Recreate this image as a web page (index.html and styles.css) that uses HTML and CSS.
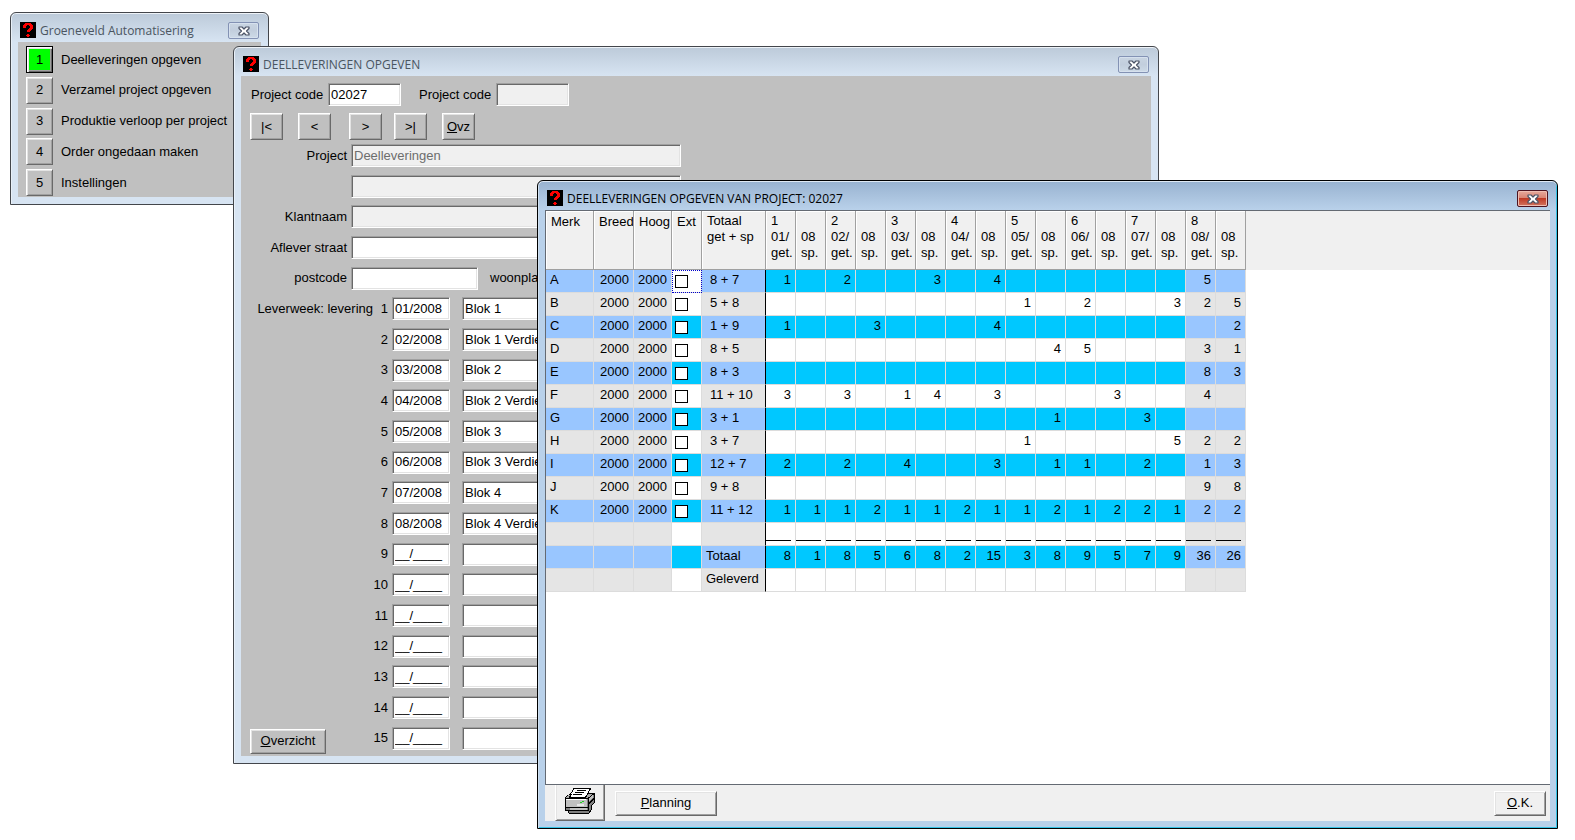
FILE: index.html
```
<!DOCTYPE html>
<html lang="nl">
<head>
<meta charset="utf-8">
<title>Deelleveringen opgeven</title>
<link rel="stylesheet" href="styles.css">
</head>
<body>
<svg class="defs" aria-hidden="true">
  <symbol id="app-icon" viewBox="0 0 16 16" shape-rendering="crispEdges">
    <path fill="#000" d="M0 0h16v16H0z"/>
    <path fill="#f00" d="M5 1h6v1h1v1h1v4h-1v1h-1v1h-1v1H7V8h1V7h1V6h1V4H9V3H7v1H6v2H3V3h1V2h1zM7 12h2v1h1v1H9v1H7v-1H6v-1h1z"/>
  </symbol>
  <symbol id="close-icon" viewBox="0 0 12 10">
    <path fill="#fff" stroke="#4b5366" stroke-width="1.200" stroke-linejoin="round" d="M1 1h3l2 2 2-2h3v1.500L8.500 5 11 7.500V9H8L6 7 4 9H1V7.500L3.500 5 1 2.500z"/>
  </symbol>
</svg>
<main class="desktop">
  <section class="window menu-window">
    <header class="titlebar">
      <svg class="app-icon" aria-hidden="true"><use href="#app-icon"/></svg>
      <h1 class="title">Groeneveld Automatisering</h1>
      <button class="close" aria-label="Sluiten"><svg class="close-icon"><use href="#close-icon"/></svg></button>
    </header>
    <div class="client menu">
      <div class="menu-row"><button class="btn menu-btn current" id="m1">1</button><label for="m1">Deelleveringen opgeven</label></div>
      <div class="menu-row"><button class="btn menu-btn" id="m2">2</button><label for="m2">Verzamel project opgeven</label></div>
      <div class="menu-row"><button class="btn menu-btn" id="m3">3</button><label for="m3">Produktie verloop per project</label></div>
      <div class="menu-row"><button class="btn menu-btn" id="m4">4</button><label for="m4">Order ongedaan maken</label></div>
      <div class="menu-row"><button class="btn menu-btn" id="m5">5</button><label for="m5">Instellingen</label></div>
    </div>
  </section>

  <section class="window form-window">
    <header class="titlebar">
      <svg class="app-icon" aria-hidden="true"><use href="#app-icon"/></svg>
      <h1 class="title">DEELLEVERINGEN OPGEVEN</h1>
      <button class="close" aria-label="Sluiten"><svg class="close-icon"><use href="#close-icon"/></svg></button>
    </header>
    <form class="client form">
      <div class="code-row">
        <label for="code1">Project code</label><input class="field code" id="code1" value="02027">
        <label class="second" for="code2">Project code</label><input class="field code" id="code2" disabled>
      </div>
      <div class="nav-row">
        <button type="button" class="btn nav-btn">|&lt;</button>
        <button type="button" class="btn nav-btn">&lt;</button>
        <button type="button" class="btn nav-btn">&gt;</button>
        <button type="button" class="btn nav-btn">&gt;|</button>
        <button type="button" class="btn nav-btn"><u>O</u>vz</button>
      </div>
      <div class="fields">
        <div class="row"><label class="name" for="project">Project</label><input class="field long" id="project" value="Deelleveringen" disabled></div>
        <div class="row"><span class="name"></span><input class="field long" aria-label="Project vervolg" disabled></div>
        <div class="row"><label class="name" for="klant">Klantnaam</label><input class="field long" id="klant" disabled></div>
        <div class="row"><label class="name" for="straat">Aflever straat</label><input class="field long" id="straat"></div>
        <div class="row"><label class="name" for="postcode">postcode</label><input class="field zip" id="postcode"><label class="city" for="plaats">woonplaats</label><input class="field" id="plaats"></div>
        <div class="row"><span class="week">Leverweek: levering</span><label class="num" for="w1">1</label><input class="field date" id="w1" value="01/2008"><input class="field long" aria-label="Omschrijving 1" value="Blok 1"></div>
        <div class="row"><span class="week"></span><label class="num" for="w2">2</label><input class="field date" id="w2" value="02/2008"><input class="field long" aria-label="Omschrijving 2" value="Blok 1 Verdieping"></div>
        <div class="row"><span class="week"></span><label class="num" for="w3">3</label><input class="field date" id="w3" value="03/2008"><input class="field long" aria-label="Omschrijving 3" value="Blok 2"></div>
        <div class="row"><span class="week"></span><label class="num" for="w4">4</label><input class="field date" id="w4" value="04/2008"><input class="field long" aria-label="Omschrijving 4" value="Blok 2 Verdieping"></div>
        <div class="row"><span class="week"></span><label class="num" for="w5">5</label><input class="field date" id="w5" value="05/2008"><input class="field long" aria-label="Omschrijving 5" value="Blok 3"></div>
        <div class="row"><span class="week"></span><label class="num" for="w6">6</label><input class="field date" id="w6" value="06/2008"><input class="field long" aria-label="Omschrijving 6" value="Blok 3 Verdieping"></div>
        <div class="row"><span class="week"></span><label class="num" for="w7">7</label><input class="field date" id="w7" value="07/2008"><input class="field long" aria-label="Omschrijving 7" value="Blok 4"></div>
        <div class="row"><span class="week"></span><label class="num" for="w8">8</label><input class="field date" id="w8" value="08/2008"><input class="field long" aria-label="Omschrijving 8" value="Blok 4 Verdieping"></div>
        <div class="row"><span class="week"></span><label class="num" for="w9">9</label><input class="field date" id="w9" value="__/____"><input class="field long" aria-label="Omschrijving 9"></div>
        <div class="row"><span class="week"></span><label class="num" for="w10">10</label><input class="field date" id="w10" value="__/____"><input class="field long" aria-label="Omschrijving 10"></div>
        <div class="row"><span class="week"></span><label class="num" for="w11">11</label><input class="field date" id="w11" value="__/____"><input class="field long" aria-label="Omschrijving 11"></div>
        <div class="row"><span class="week"></span><label class="num" for="w12">12</label><input class="field date" id="w12" value="__/____"><input class="field long" aria-label="Omschrijving 12"></div>
        <div class="row"><span class="week"></span><label class="num" for="w13">13</label><input class="field date" id="w13" value="__/____"><input class="field long" aria-label="Omschrijving 13"></div>
        <div class="row"><span class="week"></span><label class="num" for="w14">14</label><input class="field date" id="w14" value="__/____"><input class="field long" aria-label="Omschrijving 14"></div>
        <div class="row"><span class="week"><button type="button" class="btn overview"><u>O</u>verzicht</button></span><label class="num" for="w15">15</label><input class="field date" id="w15" value="__/____"><input class="field long" aria-label="Omschrijving 15"></div>
      </div>
    </form>
  </section>

  <section class="window active grid-window">
    <header class="titlebar">
      <svg class="app-icon" aria-hidden="true"><use href="#app-icon"/></svg>
      <h1 class="title">DEELLEVERINGEN OPGEVEN VAN PROJECT: 02027</h1>
      <button class="close" aria-label="Sluiten"><svg class="close-icon"><use href="#close-icon"/></svg></button>
    </header>
    <div class="client panel">
      <div class="pane">
        <table class="grid">
          <colgroup>
            <col class="c-merk"><col class="c-breed"><col class="c-hoog"><col class="c-ext"><col class="c-totaal">
            <col class="c-week" span="16"><col>
          </colgroup>
          <thead>
            <tr>
              <th>Merk</th><th>Breed</th><th>Hoog</th><th>Ext</th><th>Totaal<br>get + sp</th>
              <th>1<br>01/<br>get.</th><th><br>08<br>sp.</th><th>2<br>02/<br>get.</th><th><br>08<br>sp.</th>
              <th>3<br>03/<br>get.</th><th><br>08<br>sp.</th><th>4<br>04/<br>get.</th><th><br>08<br>sp.</th>
              <th>5<br>05/<br>get.</th><th><br>08<br>sp.</th><th>6<br>06/<br>get.</th><th><br>08<br>sp.</th>
              <th>7<br>07/<br>get.</th><th><br>08<br>sp.</th><th>8<br>08/<br>get.</th><th><br>08<br>sp.</th><th></th>
            </tr>
          </thead>
          <tbody>
            <tr><td>A</td><td>2000</td><td>2000</td><td class="focus"><input type="checkbox" aria-label="Ext A"></td><td>8 + 7</td><td>1</td><td></td><td>2</td><td></td><td></td><td>3</td><td></td><td>4</td><td></td><td></td><td></td><td></td><td></td><td></td><td>5</td><td></td><td></td></tr>
            <tr><td>B</td><td>2000</td><td>2000</td><td><input type="checkbox" aria-label="Ext B"></td><td>5 + 8</td><td></td><td></td><td></td><td></td><td></td><td></td><td></td><td></td><td>1</td><td></td><td>2</td><td></td><td></td><td>3</td><td>2</td><td>5</td><td></td></tr>
            <tr><td>C</td><td>2000</td><td>2000</td><td><input type="checkbox" aria-label="Ext C"></td><td>1 + 9</td><td>1</td><td></td><td></td><td>3</td><td></td><td></td><td></td><td>4</td><td></td><td></td><td></td><td></td><td></td><td></td><td></td><td>2</td><td></td></tr>
            <tr><td>D</td><td>2000</td><td>2000</td><td><input type="checkbox" aria-label="Ext D"></td><td>8 + 5</td><td></td><td></td><td></td><td></td><td></td><td></td><td></td><td></td><td></td><td>4</td><td>5</td><td></td><td></td><td></td><td>3</td><td>1</td><td></td></tr>
            <tr><td>E</td><td>2000</td><td>2000</td><td><input type="checkbox" aria-label="Ext E"></td><td>8 + 3</td><td></td><td></td><td></td><td></td><td></td><td></td><td></td><td></td><td></td><td></td><td></td><td></td><td></td><td></td><td>8</td><td>3</td><td></td></tr>
            <tr><td>F</td><td>2000</td><td>2000</td><td><input type="checkbox" aria-label="Ext F"></td><td>11 + 10</td><td>3</td><td></td><td>3</td><td></td><td>1</td><td>4</td><td></td><td>3</td><td></td><td></td><td></td><td>3</td><td></td><td></td><td>4</td><td></td><td></td></tr>
            <tr><td>G</td><td>2000</td><td>2000</td><td><input type="checkbox" aria-label="Ext G"></td><td>3 + 1</td><td></td><td></td><td></td><td></td><td></td><td></td><td></td><td></td><td></td><td>1</td><td></td><td></td><td>3</td><td></td><td></td><td></td><td></td></tr>
            <tr><td>H</td><td>2000</td><td>2000</td><td><input type="checkbox" aria-label="Ext H"></td><td>3 + 7</td><td></td><td></td><td></td><td></td><td></td><td></td><td></td><td></td><td>1</td><td></td><td></td><td></td><td></td><td>5</td><td>2</td><td>2</td><td></td></tr>
            <tr><td>I</td><td>2000</td><td>2000</td><td><input type="checkbox" aria-label="Ext I"></td><td>12 + 7</td><td>2</td><td></td><td>2</td><td></td><td>4</td><td></td><td></td><td>3</td><td></td><td>1</td><td>1</td><td></td><td>2</td><td></td><td>1</td><td>3</td><td></td></tr>
            <tr><td>J</td><td>2000</td><td>2000</td><td><input type="checkbox" aria-label="Ext J"></td><td>9 + 8</td><td></td><td></td><td></td><td></td><td></td><td></td><td></td><td></td><td></td><td></td><td></td><td></td><td></td><td></td><td>9</td><td>8</td><td></td></tr>
            <tr><td>K</td><td>2000</td><td>2000</td><td><input type="checkbox" aria-label="Ext K"></td><td>11 + 12</td><td>1</td><td>1</td><td>1</td><td>2</td><td>1</td><td>1</td><td>2</td><td>1</td><td>1</td><td>2</td><td>1</td><td>2</td><td>2</td><td>1</td><td>2</td><td>2</td><td></td></tr>
            <tr class="rule"><td></td><td></td><td></td><td></td><td></td><td></td><td></td><td></td><td></td><td></td><td></td><td></td><td></td><td></td><td></td><td></td><td></td><td></td><td></td><td></td><td></td><td></td></tr>
            <tr class="sum"><td></td><td></td><td></td><td></td><td>Totaal</td><td>8</td><td>1</td><td>8</td><td>5</td><td>6</td><td>8</td><td>2</td><td>15</td><td>3</td><td>8</td><td>9</td><td>5</td><td>7</td><td>9</td><td>36</td><td>26</td><td></td></tr>
            <tr class="sum"><td></td><td></td><td></td><td></td><td>Geleverd</td><td></td><td></td><td></td><td></td><td></td><td></td><td></td><td></td><td></td><td></td><td></td><td></td><td></td><td></td><td></td><td></td><td></td></tr>
          </tbody>
        </table>
      </div>
      <footer class="actions">
        <button class="btn print" aria-label="Afdrukken">
          <svg class="printer" viewBox="0 0 30 27" aria-hidden="true" shape-rendering="crispEdges">
            <path fill="#808080" stroke="#000" d="M.5 10.500 6 6.500H29.500V15.500L26.500 18.500V22.500L23.500 26.500H4.500L2.500 23.500H.5z"/>
            <path fill="#a8a8a8" d="M1 10 6 7h23l-6 4H1z"/>
            <path fill="#c0c0c0" d="M1 12h21v8H1z"/>
            <path fill="#fff" stroke="#000" d="M8.500 1.500H25.500L20.500 10.500H4.500L6.500 6.500z"/>
            <path fill="none" stroke="#000" d="M12 3.500h9M10 5.500h9M8 7.500h9M1 11.500h22v12M1 20.500h22M3 23.500h20M23 11.500l6-5M24 16.500l5-5"/>
            <path fill="#e8e8e8" d="M12 17h7v2h-7z"/>
            <path fill="none" stroke="#20d020" d="M15 15.500h2M17 14.500h2"/>
            <path fill="none" stroke="#fff" d="M1 12.500h20"/>
            <path fill="#c0c0c0" d="M5 21h17v2H5zM24 11l4-4v3l-4 4z"/>
          </svg>
        </button>
        <button class="btn planning"><u>P</u>lanning</button>
        <button class="btn ok"><u>O</u>.K.</button>
      </footer>
    </div>
  </section>
</main>
</body>
</html>
```
FILE: styles.css
```
* { box-sizing: border-box; }
body {
  margin: 0;
  background: #fff;
  color: #000;
  font: 13px/16px "Liberation Sans", Arial, sans-serif;
}
button, input { font: inherit; color: inherit; margin: 0; }
.defs { display: none; }
.desktop { position: relative; height: 100vh; overflow: hidden; }

/* window frames */
.window {
  position: absolute;
  display: flex;
  flex-direction: column;
  padding: 0 7px 7px;
  border: 1px solid #43464b;
  border-radius: 6px 6px 0 0;
  background: linear-gradient(#bccad9, #d7e4f2 29px);
  box-shadow: inset 0 1px #eef3f8, inset 1px 0 #e8f0f8;
}
.active {
  border-color: #000;
  background: linear-gradient(#98b2d0, #b9d1ea 29px);
  box-shadow: inset 0 1px #dfe9f4, inset 1px 0 #cfe0f0, inset -1px -1px #35c3e6;
}
.menu-window { left: 10px; top: 12px; width: 259px; }
.form-window { left: 233px; top: 46px; right: 416px; }
.grid-window { left: 537px; top: 180px; right: 17px; bottom: 11px; }

.titlebar { display: flex; align-items: flex-start; height: 29px; padding: 9px 2px 0; }
.app-icon { width: 16px; height: 16px; }
.title {
  flex: 1;
  margin: 0 0 0 4px;
  font: 12px/17px "Open Sans", "Noto Sans", sans-serif;
  color: #4a5561;
  white-space: nowrap;
}
.active .title { color: #000; }
.close {
  display: flex;
  align-items: center;
  justify-content: center;
  width: 31px;
  height: 17px;
  padding: 0;
  border: 1px solid #8392b4;
  border-radius: 2px;
  background: linear-gradient(#c9d5e2, #c2cedd 50%, #cddae7);
  box-shadow: inset 0 0 0 1px #d6e1ee;
}
.active .close {
  border-color: #4c1320;
  background: linear-gradient(#e6a99c, #d98372 48%, #bf3a25 50%, #d27560);
  box-shadow: inset 0 0 0 1px #eebdb2;
}
.close-icon { width: 12px; height: 10px; }
.client { background: #c0c0c0; }

/* raised buttons and sunken fields */
.btn {
  padding: 0;
  border: 1px solid;
  border-color: #fff #696969 #696969 #fff;
  box-shadow: inset 1px 1px #e3e3e3, inset -1px -1px #a0a0a0;
  background: #c0c0c0;
  text-align: center;
}
.field {
  height: 23px;
  padding: 0 2px 1px;
  border: 1px solid;
  border-color: #a0a0a0 #fff #fff #a0a0a0;
  border-radius: 0;
  box-shadow: inset 1px 1px #696969, inset -1px -1px #e3e3e3;
  background: #fff;
}
.field:disabled { background: #f0f0f0; color: #6d6d6d; }

/* menu window */
.menu {
  display: flex;
  flex-direction: column;
  justify-content: space-between;
  height: 155px;
  padding: 4px 8px 1px;
}
.menu-row { display: flex; align-items: center; gap: 8px; white-space: nowrap; }
.menu-btn { width: 27px; height: 27px; }
.current {
  border-color: #000;
  background: #0f0;
  box-shadow: inset 1px 1px #fff, inset 2px 2px #e3e3e3, inset -1px -1px #696969, inset -2px -2px #a0a0a0;
}

/* form window */
.form { padding: 7px 9px 6px; }
.code-row { display: flex; align-items: center; }
.code { width: 73px; margin-left: 3px; }
.code-row label { width: 74px; margin-left: 1px; white-space: nowrap; }
.code-row .second { margin-left: 18px; }
.nav-row { display: flex; gap: 15px; padding: 7px 0 4px; }
.nav-btn { width: 33px; height: 27px; }
.nav-btn:nth-child(3) { margin-left: 3px; }
.nav-btn:nth-child(4) { margin-left: -3px; }
.fields {
  display: flex;
  flex-direction: column;
  justify-content: space-between;
  height: 606px;
}
.row { display: flex; align-items: center; height: 23px; white-space: nowrap; }
.name { width: 97px; text-align: right; }
.name + .field { margin-left: 4px; }
.week { display: flex; justify-content: flex-end; width: 123px; }
.num { width: 15px; text-align: right; }
.date { width: 58px; margin: 0 12px 0 4px; }
.long { width: 330px; }
.zip { width: 127px; }
.city { margin: 0 8px 0 12px; }
.overview { width: 76px; height: 25px; margin: 6px auto 0 0; }

/* delivery grid window */
.panel { flex: 1; display: flex; flex-direction: column; min-height: 0; background: #f0f0f0; }
.pane {
  flex: 1;
  min-height: 0;
  overflow: hidden;
  background: #fff;
  border: 1px solid #646a73;
  border-right: 0;
}
.grid { width: 100%; table-layout: fixed; border-collapse: separate; border-spacing: 0; }
.c-merk { width: 48px; }
.c-breed { width: 40px; }
.c-hoog { width: 38px; }
.c-ext { width: 30px; }
.c-totaal { width: 64px; }
.c-week { width: 30px; }
.grid th {
  height: 59px;
  padding: 2px 0 0 5px;
  border-right: 1px solid #a0a0a0;
  border-bottom: 1px solid #a0a0a0;
  box-shadow: inset 1px 1px #fff;
  background: #f0f0f0;
  font-weight: 400;
  text-align: left;
  vertical-align: top;
  white-space: nowrap;
  overflow: hidden;
}
.grid th:nth-child(-n+4) { padding-top: 3px; }
.grid td {
  height: 23px;
  padding: 0 4px 2px 0;
  border-right: 1px solid #dcdcdc;
  border-bottom: 1px solid #dcdcdc;
  text-align: right;
  white-space: nowrap;
}
.grid tr:nth-child(odd) td { background: #00c8ff; }
.grid td:nth-child(-n+3), .grid td:nth-child(5), .grid td:nth-child(n+20) { background: #e5e5e5; }
.grid tr:nth-child(odd) td:nth-child(-n+3),
.grid tr:nth-child(odd) td:nth-child(5),
.grid tr:nth-child(odd) td:nth-child(n+20) { background: #99c6ff; }
.grid td:nth-child(1) { padding-left: 4px; text-align: left; }
.grid td:nth-child(4) { padding: 1px 0 0 3px; text-align: left; }
.grid td:nth-child(5) { padding-left: 8px; text-align: left; border-right-color: #000; }
.grid .sum td:nth-child(5) { padding-left: 4px; }
.grid tbody tr:nth-child(n) td:nth-child(22) { background: #fff; border-color: #fff; }
.grid th:last-child { border-color: #f0f0f0; box-shadow: none; }
.grid tbody tr:nth-child(1) .focus { background: #fff; outline: 1px dotted #00c; outline-offset: -1px; }
.grid .rule td:nth-child(n+6):not(:last-child)::after {
  content: "";
  display: block;
  width: 25px;
  margin-top: 14px;
  border-bottom: 1px solid #000;
}
.grid input {
  display: block;
  appearance: none;
  width: 13px;
  height: 13px;
  border: 1px solid #000;
  background: #fff;
}
.actions { display: flex; align-items: center; height: 36px; padding: 0 4px 0 10px; }
.actions .btn { background: #f0f0f0; }
.actions .print {
  display: flex;
  justify-content: center;
  width: 50px;
  height: 36px;
  padding-top: 2px;
  border-top: 0;
  box-shadow: inset 1px 0 #e3e3e3, inset -1px -1px #a0a0a0;
}
.printer { width: 30px; height: 27px; }
.planning { width: 102px; height: 25px; margin-left: 10px; }
.ok { width: 52px; height: 25px; margin-left: auto; }
```
